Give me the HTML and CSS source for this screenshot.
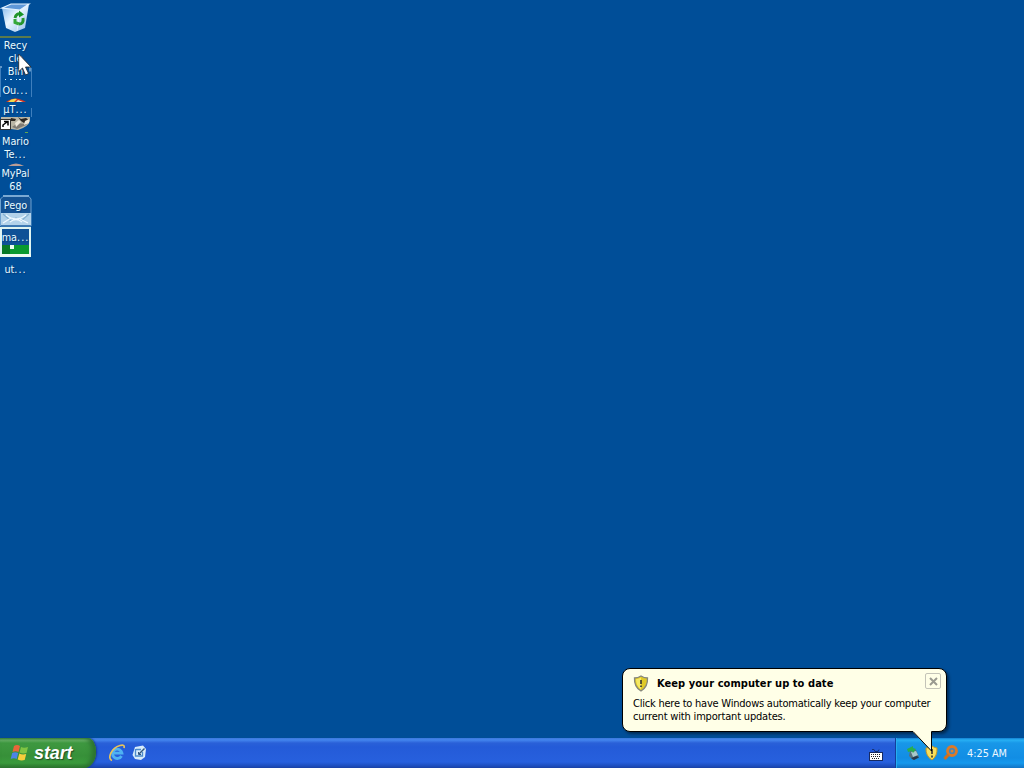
FILE: index.html
```
<!DOCTYPE html>
<html lang="en">
<head>
    <meta charset="UTF-8">
    <title>Desktop</title>
    <link rel="stylesheet" href="styles.css">
</head>
<body>
<div class="screen">
    <div class="desktop">
        <div class="icon bin">
            <svg width="32" height="36" viewBox="0 0 32 36">
                <defs>
                    <linearGradient id="glass" x1="0" y1="0" x2="1" y2="1">
                        <stop offset="0" stop-color="#7db4ea"/>
                        <stop offset=".45" stop-color="#eaf6ff"/>
                        <stop offset="1" stop-color="#8db9ea"/>
                    </linearGradient>
                </defs>
                <path d="M2 8 L11 5 L29 4 L25 28 L15 32 L6 28 Z" fill="url(#glass)"/>
                <path d="M2 8 L11 4 L29 4 L20 10 Z" fill="#5e98d8" stroke="#e4f4ff" stroke-width="1.2"/>
                <path d="M20 10 L17 31" stroke="#fff" stroke-width="1" opacity=".6"/>
                <path d="M15 18 q1-5 6-4" fill="none" stroke="#25952d" stroke-width="3"/>
                <path d="M19 10.500 l5 4 -5 3z" fill="#169325"/>
                <path d="M23 18 q1 6-4 6" fill="none" stroke="#25952d" stroke-width="3"/>
                <path d="M15 19 l0 3.500 4 1.500" fill="none" stroke="#35a83a" stroke-width="3"/>
            </svg>
        </div>
        <div class="rule"></div>
        <div class="label recycle">Recy<br>cle<br>Bin</div>
        <div class="label outlook">Ou<i>...</i></div>
        <svg class="pic dots" width="32" height="54" viewBox="0 0 32 54">
            <path d="M.5 3 V32 M31.500 3 V32 M31.500 43 V52" stroke="#3f7fbd"/>
            <path d="M0 2 h2 M28 1.500 h2 v5" stroke="#c4dff5" fill="none"/>
            <path d="M5 14.500 h1 M10 14.500 h2 M16 14.500 h1 M19 14.500 h2 M24 14.500 h1" stroke="#d7f0fb"/>
        </svg>
        <svg class="pic cap" width="32" height="8" viewBox="0 0 32 8">
            <path d="M6 5 Q15-2 26 5 Z" fill="#d63522"/>
            <path d="M8 5 Q12 1 17 2 L14 5 Z" fill="#f2d94f"/>
            <path d="M18 3 l5 2 -2 0 -5 0z" fill="#e9e3c2"/>
        </svg>
        <div class="label torrent">µT<i>...</i></div>
        <svg class="pic mario" width="32" height="19" viewBox="0 0 32 19">
            <path d="M1 2 H30 V6 Q28 12 18 15 L11 14 V4 H1 Z" fill="#b9b5a5"/>
            <path d="M11 3 l5 1 -1 2 h-5z M18 2 l3 2 5-1 3 2 -5 3 -3-2z" fill="#2c2722"/>
            <path d="M12 12 l6-4 6 1 5-3 -3 4 -9 4z" fill="#817c74"/>
            <path d="M15 8 l4-3 2 2 -5 5z M25 6 l4-2 v4l-5 2z" fill="#ede8da"/>
            <path d="M25 17.500 h3" stroke="#63a64f"/>
            <rect x=".5" y="4.500" width="10" height="10" fill="#fff" stroke="#333"/>
            <path d="M3 12 V10 L7 7 M4 6.500 h4 v4" fill="none" stroke="#000" stroke-width="1.500"/>
        </svg>
        <div class="label mario-text">Mario<br>Te<i>...</i></div>
        <svg class="pic pal" width="32" height="4" viewBox="0 0 32 4"><path d="M8 3 Q16-2 24 3z" fill="#b99d96"/></svg>
        <div class="label mypal">MyPal<br>68</div>
        <svg class="pic stack" width="32" height="64" viewBox="0 0 32 64">
            <path d="M.500 4 L3 1.500 H29 L31 4 V31 H.500 Z" fill="#155394" stroke="#6ea2d0"/>
            <path d="M3 1 H29" stroke="#7ba9d3" stroke-width="2"/>
            <rect x="1" y="18" width="30" height="12" fill="#b3d3ea"/>
            <path d="M3 19 L11 26 L16 23 L21 26 L29 19" fill="none" stroke="#86b2d2" stroke-width="1.300"/>
            <path d="M3 28 L11 23 M20 24 L28 28 M6 20 q10 8 20 0 M10 27 q6-5 12 0" fill="none" stroke="#eef9ff" stroke-width="1.300"/>
            <rect x="1" y="33" width="29" height="28" fill="#0e5196" stroke="#dff4f2" stroke-width="2"/>
            <rect x="2" y="50" width="27" height="9" fill="#0a9a30"/>
            <path d="M2 50 h8 v9 h-8z" fill="#087a26"/>
            <rect x="10" y="50" width="4" height="4" fill="#ecfff0"/>
            <rect x="0" y="59" width="31" height="3" fill="#edfbf3"/>
        </svg>
        <div class="label pego">Pego</div>
        <div class="label mail">ma<i>...</i></div>
        <div class="label ut">ut<i>...</i></div>
        <svg class="pic cursor" width="14" height="24" viewBox="0 0 14 24">
            <path d="M.7 1 V18.500 L4.500 15 L7.500 22 L10.500 20.500 L7.500 14 H13 Z" fill="#fff" stroke="#222" stroke-width=".8"/>
        </svg>
    </div>

    <div class="taskbar">
        <div class="start">
            <svg width="20" height="20" viewBox="0 0 20 20">
                <path d="M4 3 Q7 1 10 3 L8.500 9 Q5.500 7.500 2.500 9 Z" fill="#e9663a"/>
                <path d="M11 4 Q14 5.500 18 4 L16.500 10 Q13 11 9.500 9.500 Z" fill="#7fc443"/>
                <path d="M2.200 10 Q5 8.500 8.200 10 L6.700 16 Q4 14.500 .7 16 Z" fill="#4c84e6"/>
                <path d="M9.300 10.500 Q12.500 12 16.200 11 L14.700 17 Q11 18 7.700 16.500 Z" fill="#f6ce3c"/>
            </svg>
            <span>start</span>
        </div>
        <div class="quick">
            <svg width="18" height="18" viewBox="0 0 18 18">
                <path d="M13.500 12 A4.700 4.700 0 1 1 14 9.200 H6" fill="none" stroke="#4fb2f2" stroke-width="2.800"/>
                <path d="M4 16.500 C-1 15 3 4 12 1.500 Q17 0 16 4" fill="none" stroke="#e8c35c" stroke-width="1.700"/>
            </svg>
            <svg width="18" height="18" viewBox="0 0 18 18">
                <path d="M4 3 L12 1.500 L15 5 L14 13 L10 16 L4 15 L1.500 11 Z" fill="#d8ecfb"/>
                <path d="M5 5.500 h5 M4.500 5 v7 h7 v-4" fill="none" stroke="#4c8ccd" stroke-width="1.300"/>
                <path d="M8 10 L13.500 4.500" stroke="#31577f" stroke-width="1.500"/>
                <path d="M7.500 8 v2.500 h2.500" fill="none" stroke="#31577f"/>
            </svg>
        </div>
        <div class="lang">
            <svg width="14" height="14" viewBox="0 0 14 14">
                <path d="M3 1.500 h2 l1 2 h3 l1-2" fill="none" stroke="#173476"/>
                <rect x=".500" y="4.500" width="13" height="8" fill="#fff" stroke="#162a62"/>
                <path d="M2 6.500 h10 M2 8.500 h10 M3 10.500 h8" stroke="#222" stroke-dasharray="1 1"/>
            </svg>
        </div>
        <div class="tray">
            <svg width="16" height="16" viewBox="0 0 16 16">
                <path d="M5 6 L11 5 L14 12 L8 15 L4 11 Z" fill="#56707c"/>
                <path d="M6 7 l5-1 2 4 -5 2z" fill="#a9c8cc"/>
                <path d="M2 4 L8 1 L8 3 L11 4 L8 8 L7 6 L3 7 Z" fill="#29ae4e"/>
                <path d="M6 13 l6-2 2 1.500 -5 2.500z" fill="#26384d"/>
            </svg>
            <svg width="16" height="16" viewBox="0 0 16 16">
                <path d="M8 1 Q11 3 13 3 Q13.500 11 8 15 Q1.500 11 2 3 Q5 3 8 1Z" fill="#f9df5a" stroke="#c79a26"/>
                <path d="M8 4 v5 M8 10.500 v2" stroke="#333" stroke-width="1.600"/>
            </svg>
            <svg width="16" height="16" viewBox="0 0 16 16">
                <circle cx="9" cy="6" r="4.500" fill="#3f86bd" stroke="#dc7a28" stroke-width="2.800"/>
                <circle cx="9" cy="6" r="1.500" fill="#d88335"/>
                <path d="M5.500 9.500 L1.500 14" stroke="#d0701f" stroke-width="3.200"/>
            </svg>
            <span class="clock">4:25 AM</span>
        </div>
    </div>

    <div class="balloon">
        <div class="head">
            <svg width="16" height="17" viewBox="0 0 16 17">
                <path d="M8 1 Q11 3 14.500 3 Q15 12 8 16 Q1 12 1.500 3 Q5 3 8 1Z" fill="#dfc928" stroke="#85867c" stroke-width="1.300"/>
                <path d="M8 2.500 Q5 4 3 4.200 Q3 11 8 14.500 Z" fill="#f5e965"/>
                <path d="M8 5 v4 M8 10.500 v1.500" stroke="#333" stroke-width="1.600"/>
            </svg>
            <b>Keep your computer up to date</b>
            <span class="close">
                <svg width="9" height="9" viewBox="0 0 9 9"><path d="M1 1 L8 8 M8 1 L1 8" stroke="#9a9a90" stroke-width="2"/></svg>
            </span>
        </div>
        <p>Click here to have Windows automatically keep your computer<br><span>current with important updates.</span></p>
        <svg class="tail" width="24" height="24" viewBox="0 0 24 24">
            <path d="M0 0 V2 L18.500 21 V2 V0 Z" fill="#ffffe7"/>
            <path d="M0 1.500 L18.500 21 V1.500" fill="none" stroke="#000"/>
            <path d="M1 0 H18 V2 H1.500 Z" fill="#ffffe7"/>
        </svg>
    </div>
</div>
</body>
</html>
```
FILE: styles.css
```
* {
    margin: 0;
    padding: 0;
    box-sizing: border-box;
}

body {
    font-family: "DejaVu Sans Condensed", "DejaVu Sans", sans-serif;
    font-size: 11px;
    overflow: hidden;
}

svg {
    display: block;
    flex: none;
}

.screen {
    width: 1024px;
    height: 768px;
    position: relative;
    display: flex;
    flex-direction: column;
    background-color: #004e98;
}

.desktop {
    flex: 1;
    position: relative;
}

.icon, .pic, .label, .rule {
    position: absolute;
    left: 0;
}

.rule {
    top: 36px;
    width: 31px;
    height: 2px;
    background-color: #5b7a4c;
}

.label {
    width: 31px;
    color: #e8fbff;
    font-size: 10.8px;
    line-height: 13px;
    text-align: center;
    white-space: nowrap;
    text-shadow: 1px 1px 1px #003a78;
}

.label i {
    font-style: normal;
    letter-spacing: 1px;
}

.recycle { top: 39px; }
.dots { top: 65px; }
.outlook { top: 84px; }
.cap { top: 97px; }
.torrent { top: 103px; }
.mario { top: 115px; }
.mario-text { top: 135px; }
.pal { top: 163px; }
.mypal { top: 167px; }
.stack { top: 195px; }
.pego { top: 199px; }
.mail { top: 231px; }
.ut { top: 263px; }

.pic.cursor {
    left: 18px;
    top: 53px;
}

.taskbar {
    height: 30px;
    display: flex;
    background: linear-gradient(#3a78dc 0, #4385ee 2px, #2a60d8 5px, #245bd8 9px, #2760de 24px, #1d4dbd 28px, #1941a5 30px);
}

.start {
    width: 96px;
    display: flex;
    align-items: center;
    gap: 4px;
    padding-left: 10px;
    border-radius: 0 8px 12px 0 / 0 14px 16px 0;
    background: linear-gradient(#3b8a3e 0, #6cb56c 2px, #3e9840 5px, #379039 18px, #3a9a3c 25px, #2b752d 30px);
    box-shadow: inset -4px 0 5px #2c7230, 1px 0 2px #173b91;
}

.start span {
    color: #fff;
    font: italic bold 18px/28px "Liberation Sans", sans-serif;
    letter-spacing: -.1px;
    text-shadow: 1px 1px 1px #234d25;
}

.quick {
    display: flex;
    align-items: center;
    gap: 5px;
    padding-left: 12px;
}

.lang {
    display: flex;
    align-items: center;
    margin-left: auto;
    padding: 3px 12px 0 0;
}

.tray {
    width: 129px;
    display: flex;
    align-items: center;
    gap: 3px;
    padding-left: 9px;
    border-left: 1px solid #133f9b;
    background: linear-gradient(#1480d2 0, #27b0f4 2px, #1897e8 5px, #128de4 20px, #1599ed 25px, #1273c4 30px);
    box-shadow: inset 1px 0 #26aef0;
}

.clock {
    margin-left: 5px;
    color: #eef8ff;
    font-size: 10.8px;
}

.balloon {
    position: absolute;
    left: 622px;
    top: 668px;
    width: 325px;
    height: 64px;
    padding: 6px 5px 0 10px;
    border: 1px solid #000;
    border-radius: 8px;
    background-color: #ffffe7;
    box-shadow: 2px 2px 3px rgba(0, 0, 0, .45);
}

.head {
    display: flex;
    height: 17px;
    align-items: center;
}

.head b {
    margin-left: 8px;
    letter-spacing: .06px;
}

.close {
    width: 16px;
    height: 16px;
    display: flex;
    align-items: center;
    justify-content: center;
    margin: -5px 0 0 auto;
    border: 1px solid #c4c4b8;
    border-radius: 2px;
}

.balloon p {
    margin-top: 5px;
    line-height: 13px;
    letter-spacing: -.225px;
    white-space: nowrap;
}

.balloon p span {
    letter-spacing: -.18px;
}

.tail {
    position: absolute;
    left: 290px;
    top: 61px;
}
```
